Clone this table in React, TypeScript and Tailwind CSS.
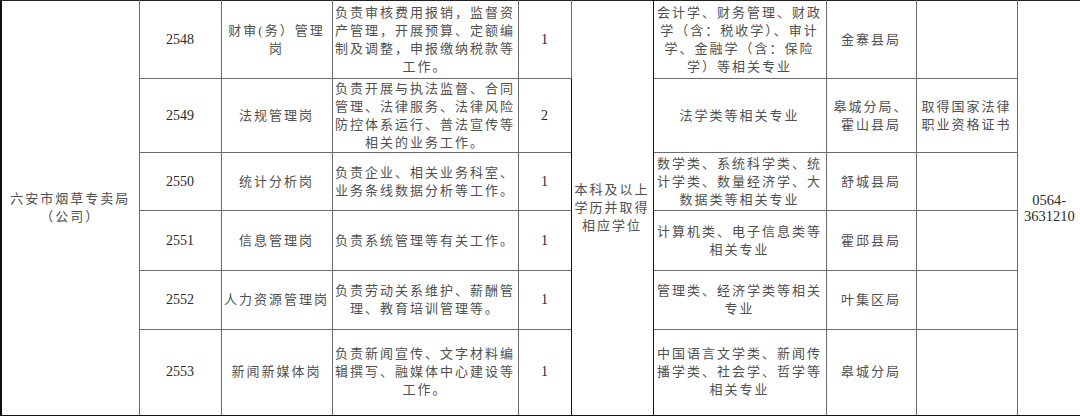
const font = { fontFamily: '"Liberation Serif", "Noto Sans CJK SC", serif' };

type Row = {
  code: string;
  post: string[];
  duty: string[];
  count: string;
  major: string[];
  place: string[];
  note: string[];
  h: string;
};

const rows: Row[] = [
  {
    code: "2548",
    post: ["财审(务）管理", "岗"],
    duty: ["负责审核费用报销，监督资", "产管理，开展预算、定额编", "制及调整，申报缴纳税款等", "工作。"],
    count: "1",
    major: ["会计学、财务管理、财政", "学（含：税收学）、审计", "学、金融学（含：保险", "学）等相关专业"],
    place: ["金寨县局"],
    note: [],
    h: "h-[78px]",
  },
  {
    code: "2549",
    post: ["法规管理岗"],
    duty: ["负责开展与执法监督、合同", "管理、法律服务、法律风险", "防控体系运行、普法宣传等", "相关的业务工作。"],
    count: "2",
    major: ["法学类等相关专业"],
    place: ["皋城分局、", "霍山县局"],
    note: ["取得国家法律", "职业资格证书"],
    h: "h-[74px]",
  },
  {
    code: "2550",
    post: ["统计分析岗"],
    duty: ["负责企业、相关业务科室、", "业务条线数据分析等工作。"],
    count: "1",
    major: ["数学类、系统科学类、统", "计学类、数量经济学、大", "数据类等相关专业"],
    place: ["舒城县局"],
    note: [],
    h: "h-[58px]",
  },
  {
    code: "2551",
    post: ["信息管理岗"],
    duty: ["负责系统管理等有关工作。"],
    count: "1",
    major: ["计算机类、电子信息类等", "相关专业"],
    place: ["霍邱县局"],
    note: [],
    h: "h-[60px]",
  },
  {
    code: "2552",
    post: ["人力资源管理岗"],
    duty: ["负责劳动关系维护、薪酬管", "理、教育培训管理等。"],
    count: "1",
    major: ["管理类、经济学类等相关", "专业"],
    place: ["叶集区局"],
    note: [],
    h: "h-[59px]",
  },
  {
    code: "2553",
    post: ["新闻新媒体岗"],
    duty: ["负责新闻宣传、文字材料编", "辑撰写、融媒体中心建设等", "工作。"],
    count: "1",
    major: ["中国语言文学类、新闻传", "播学类、社会学、哲学等", "相关专业"],
    place: ["皋城分局"],
    note: [],
    h: "h-[86px]",
  },
];

function Lines({ lines }: { lines: string[] }) {
  return (
    <>
      {lines.map((l, i) => (
        <div key={i} className="whitespace-nowrap">
          {l}
        </div>
      ))}
    </>
  );
}

const cell = "border border-[#6b6b6b] text-center align-middle p-0";
const cjk = "text-[13px] leading-[18px] tracking-[2px] text-[#505050]";
const num = "text-[14px] leading-[18px] text-[#2a2a2a]";

export default function App() {
  return (
    <div className="w-[1080px] h-[416px] bg-white overflow-hidden" style={font}>
      <table className="table-fixed border-collapse w-[1080px] border-l-2 border-b-2 border-l-[#111] border-b-[#111]">
        <colgroup>
          <col className="w-[138px]" />
          <col className="w-[82px]" />
          <col className="w-[111px]" />
          <col className="w-[186px]" />
          <col className="w-[53px]" />
          <col className="w-[82px]" />
          <col className="w-[173px]" />
          <col className="w-[90px]" />
          <col className="w-[101px]" />
          <col className="w-[64px]" />
        </colgroup>
        <tbody>
          {rows.map((r, i) => (
            <tr key={r.code} className={r.h}>
              {i === 0 && (
                <td rowSpan={6} className={`${cell} ${cjk} border-l-2 border-l-[#111] border-t-[#222]`}>
                  <Lines lines={["六安市烟草专卖局", "（公司）"]} />
                </td>
              )}
              <td className={`${cell} ${num} ${i === 0 ? "border-t-[#222]" : ""}`}>{r.code}</td>
              <td className={`${cell} ${cjk} ${i === 0 ? "border-t-[#222]" : ""}`}>
                <Lines lines={r.post} />
              </td>
              <td className={`${cell} ${cjk} border-l-[#333] ${i === 0 ? "border-t-[#222]" : ""}`}>
                <Lines lines={r.duty} />
              </td>
              <td className={`${cell} ${num} ${i === 0 ? "border-t-[#222]" : ""}`}>{r.count}</td>
              {i === 0 && (
                <td
                  rowSpan={6}
                  className={`${cell} ${cjk} border-l-[#111] border-r-[#111] border-t-[#222]`}
                >
                  <Lines lines={["本科及以上", "学历并取得", "相应学位"]} />
                </td>
              )}
              <td className={`${cell} ${cjk} ${i === 0 ? "border-t-[#222]" : ""}`}>
                <Lines lines={r.major} />
              </td>
              <td className={`${cell} ${cjk} ${i === 0 ? "border-t-[#222]" : ""}`}>
                <Lines lines={r.place} />
              </td>
              <td className={`${cell} ${cjk} ${i === 0 ? "border-t-[#222]" : ""}`}>
                <Lines lines={r.note} />
              </td>
              {i === 0 && (
                <td
                  rowSpan={6}
                  className={`${cell} text-[14.5px] leading-[16px] text-[#2a2a2a] border-r-0 border-t-[#222]`}
                >
                  <Lines lines={["0564-", "3631210"]} />
                </td>
              )}
            </tr>
          ))}
        </tbody>
      </table>
    </div>
  );
}
